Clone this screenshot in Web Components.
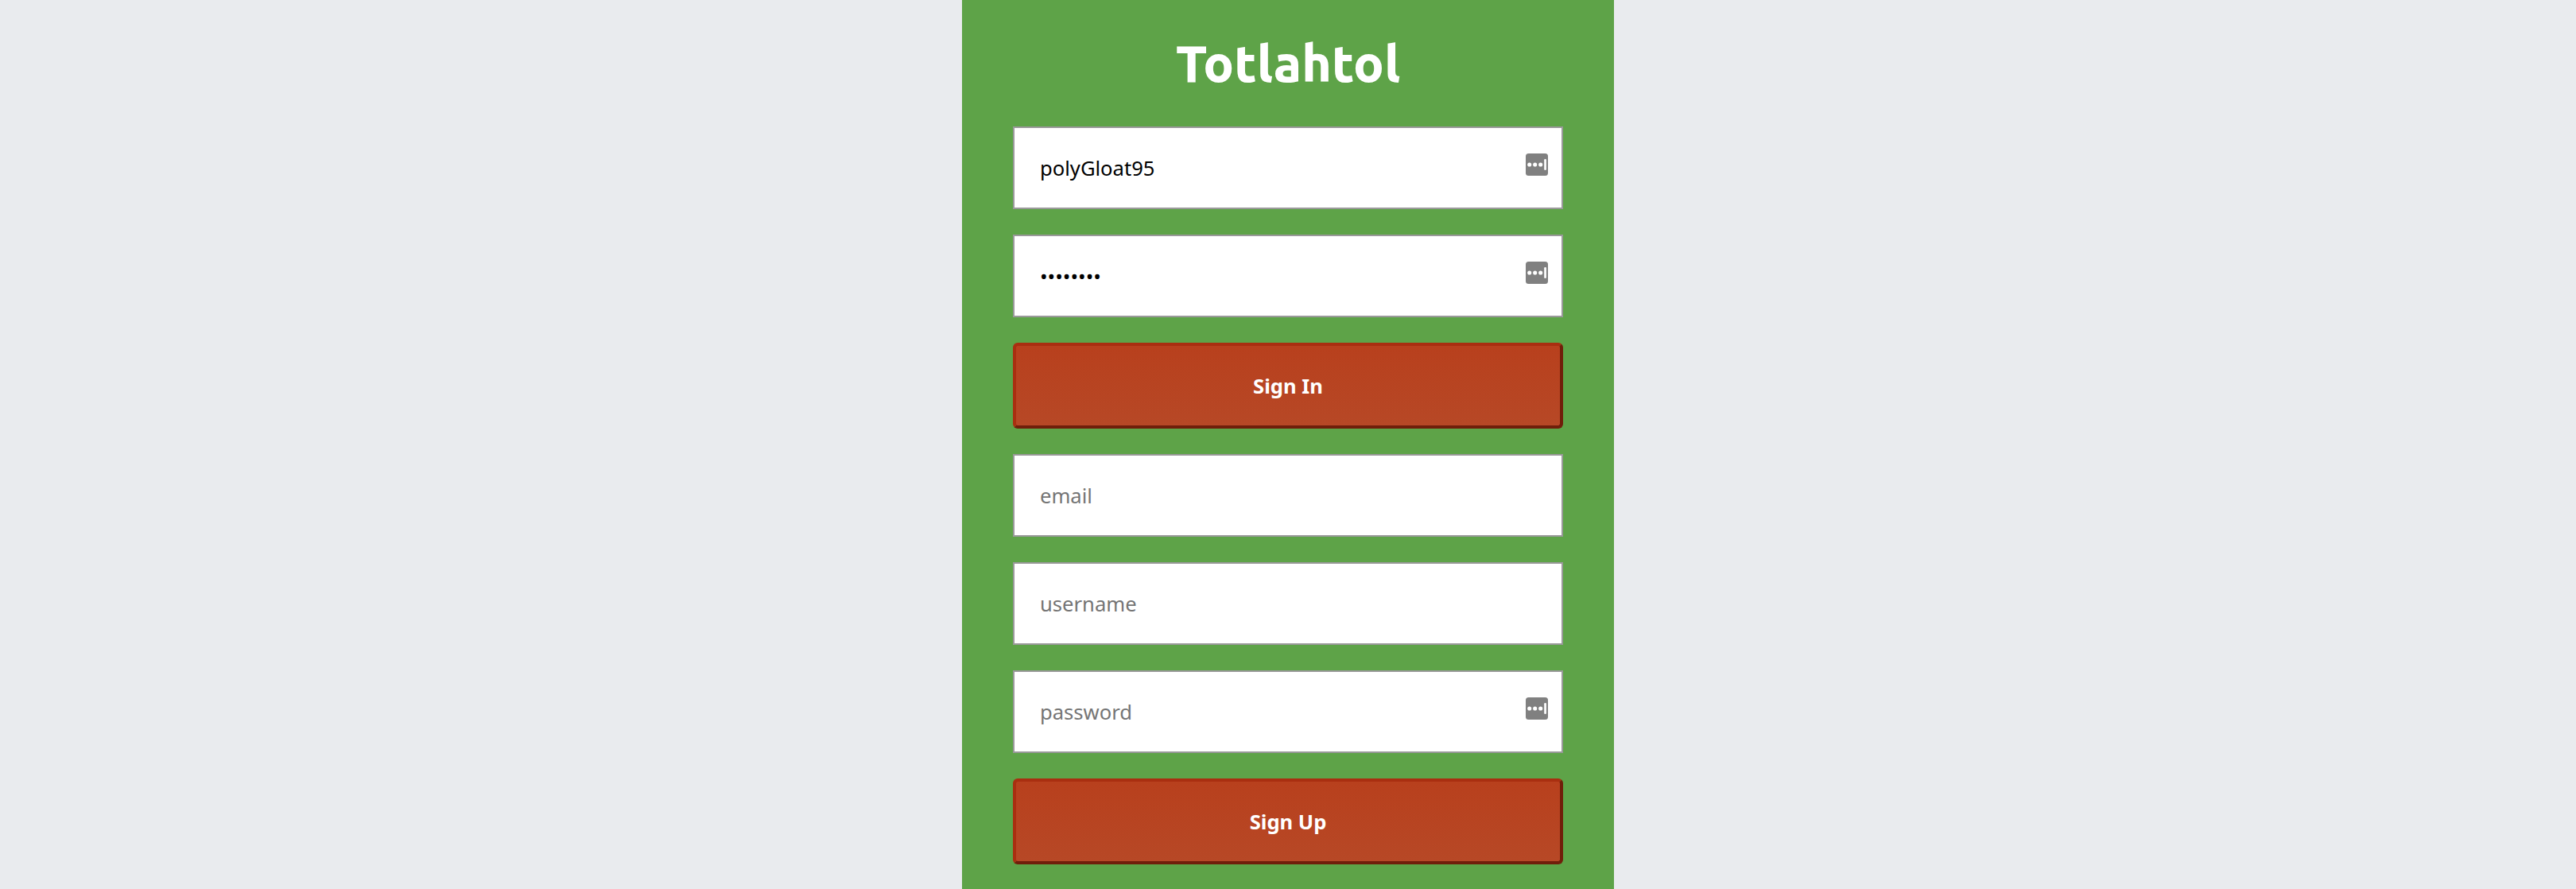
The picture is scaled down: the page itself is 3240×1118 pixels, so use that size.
<!DOCTYPE html>
<html lang="en">
<head>
<meta charset="utf-8">
<title>Totlahtol</title>
<style>
html,body{margin:0;height:100%}
body{background:#e9ebee;font-family:"Noto Sans",sans-serif;font-size:25.6px;overflow:hidden}
</style>
</head>
<body>
<auth-panel>
  <auth-title slot="title">Totlahtol</auth-title>
  <auth-field filled key>polyGloat95</auth-field>
  <auth-field filled key>••••••••</auth-field>
  <auth-button>Sign In</auth-button>
  <auth-field>email</auth-field>
  <auth-field>username</auth-field>
  <auth-field key>password</auth-field>
  <auth-button>Sign Up</auth-button>
</auth-panel>
<script>
const define = (name, html) => customElements.define(name, class extends HTMLElement {
  constructor() {
    super();
    this.attachShadow({ mode: "open" }).innerHTML = html;
  }
});

define("auth-panel", `
<style>
:host{display:flex;flex-direction:column;box-sizing:border-box;width:820px;height:1118px;margin:0 auto;padding:0 64px;background:#5ea348}
main{display:flex;flex-direction:column;gap:32px}
</style>
<slot name="title"></slot>
<main><slot></slot></main>`);

define("auth-title", `
<style>
:host{display:block;height:159px;box-sizing:border-box;padding-top:35px}
h1{margin:0;font:800 64px/88px Ubuntu,"Noto Sans",sans-serif;color:#fff;text-align:center}
</style>
<h1><slot></slot></h1>`);

define("auth-key-icon", `
<style>:host{display:block;width:28px;height:28px}svg{display:block}</style>
<svg width="28" height="28" viewBox="0 0 28 28">
<rect width="28" height="28" rx="3.5" fill="#808080"/>
<g fill="#fff"><circle cx="4.7" cy="14" r="2.55"/><circle cx="11.7" cy="14" r="2.55"/><circle cx="18.7" cy="14" r="2.55"/><rect x="23.2" y="7" width="2.7" height="14" rx="1.2"/></g>
</svg>`);

define("auth-field", `
<style>
:host{display:flex;justify-content:space-between;box-sizing:border-box;height:104px;padding:32px 17px 30px 32px;border:2px solid #999;background:#fff;color:#757575;line-height:38px}
:host([filled]){color:#000}
auth-key-icon{display:none}
:host([key]) auth-key-icon{display:block}
</style>
<span><slot></slot></span><auth-key-icon></auth-key-icon>`);

define("auth-button", `
<style>
:host{display:block}
button{display:block;width:100%;height:108px;box-sizing:border-box;margin:0;padding:32px 32px 30px;border:4px solid;border-color:#a92f10 #701e0a #701e0a #a92f10;border-radius:6px;background:linear-gradient(#b8401d,#b74826);color:#fff;font:bold 25.6px/38px "Noto Sans",sans-serif;text-align:center}
</style>
<button type="button"><slot></slot></button>`);
</script>
</body>
</html>
